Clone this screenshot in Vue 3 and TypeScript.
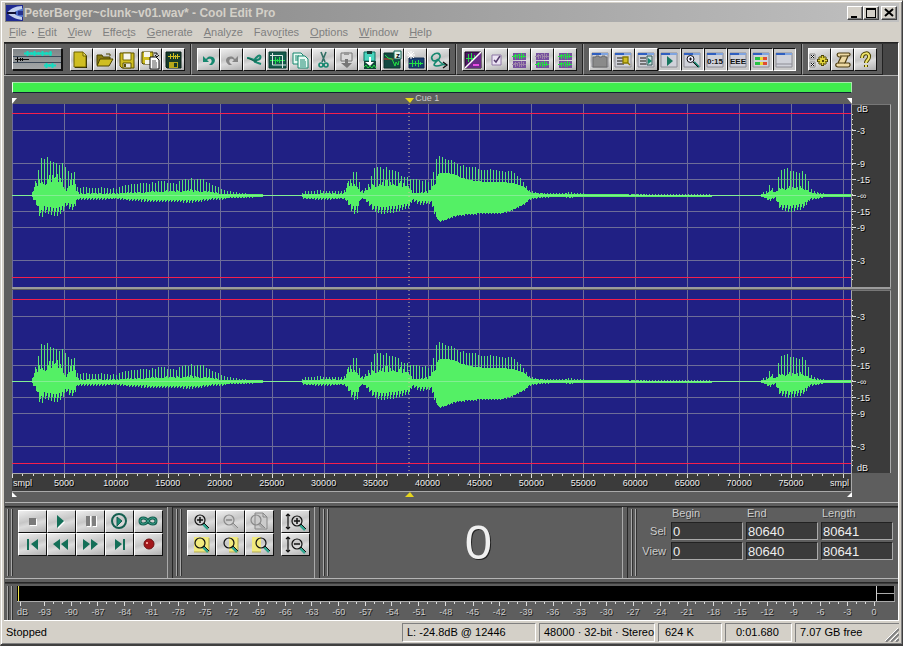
<script setup lang="ts">
import { h } from 'vue'

type Shape = [d: string, fill: string, stroke?: string, width?: number]
interface Tool { label: string; icon: string; down?: boolean }

const T = '#16876f'
const K = '#111'
const G = '#858585'
const Y = '#cfbe22'
const Q = '#2f5fc0'
const panel = (body: Shape[]): Shape[] => [
  ['M2 3h16v14H2z', '#d0d2da', '#8c8c94', 1], ['M2 3h16v2H2z', Q], ['M11 3h7v2h-7z', '#7fa4e0'], ...body,
]
const greenWave = (y: number): Shape => [`M3 ${y}.5h3M5 ${y - 1}.5h4M9 ${y - 2}.5h1M6.5 ${y - 2}v5M8.5 ${y - 1}v3M10.5 ${y - 2}v5M12.5 ${y - 3}v6M14.5 ${y - 2}v4M10 ${y}.5h7`, 'none', '#22e043', 1]
const greyWave = (y: number): Shape => [greenWave(y)[0], 'none', '#9d86a8', 1]
const lens = (x: number, y: number, c: string, handle: string): Shape[] => [
  [`M${x + 3} ${y + 4}l5 5`, 'none', handle, 2.5], [`M${x + 4} ${y + 3}l5 5`, 'none', c, 1],
  [`M${x - 5} ${y}a5 5 0 1 0 10 0a5 5 0 1 0 -10 0`, 'none', c, 1.2],
]

const icons: Record<string, Shape[]> = {
  new: [['M4 3h9l3 3v12H4z', '#17170c'], ['M3 2h9l3 3v12H3z', Y, '#6d6200', 1], ['M12 2v4h3', '#eee37a', '#6d6200', 1]],
  open: [['M3 15V5h5l1 2h7v3', '#8a7c10', '#4c4400', 1], ['M3 16l3-7h13l-4 7z', Y, '#4c4400', 1], ['M12 4h4v2', 'none', '#4c4400', 1]],
  save: [['M3 3h14v15H5l-2-2z', Y, '#5c5200', 1], ['M6 3h8v7H6z', '#f5f5ed', '#7a6d00', 1], ['M6 13h8v5H6z', '#e8e8e0', '#5c5200', 1], ['M7 14h2v3H7z', '#5c5200']],
  saveas: [['M2 2h11v12H3l-1-1z', Y, '#4c4400', 1], ['M4 2h6v5H4z', '#f5f5ed'], ['M5 10h5v4H5z', '#f5f5ed'], ['M10 7h6l3 3v9h-9z', '#fff', K, 1], ['M12 11h4M12 13h5M12 15h5M12 17h5', 'none', '#555', 1], ['M14 3h3v2M15 5l2 2 2-2', 'none', K, 1]],
  batch: [['M3 2h15v16H4l-1-1z', '#153b29', '#0b2018', 1], ['M5 6.5h12M7.5 4v5M10.5 3v6M12.5 5v4M14.5 4v5', 'none', Y, 1], ['M6 12h9v6H6z', '#b5a81a'], ['M11 13h3v4h-3z', '#153b29']],
  undo: [['M5 6v6h6L9 10c3-3 6 0 4 3l-2 2h3c6-4 2-10-4-8L8 9z', T]],
  redo: [['M17 6v6h-6l2-2c-3-3-6 0-4 3l2 2H8C2 11 6 5 12 7l2 2z', G]],
  brush: [['M3 8c4 0 7 3 10 2 5-1 4-6 1-4-2 2-5 4-3 6l6 2', 'none', T, 2], ['M4 8l6 3h3', 'none', '#0f5c4c', 1]],
  trim: [['M2 2h17v16H2z', '#155a4c', '#0d4035', 1], ['M3 10.5h15M5.5 8v5M8.5 7v7M10.5 9v3M12.5 7v6M15.5 8v5', 'none', '#24e34f', 1], ['M5.5 3v12H19M3 5.5h12.5V18', 'none', '#dce9e4', 1]],
  copy: [['M3 3h8l2 2v9H3z', '#e9fbf4', T, 1], ['M5 6h4M5 8h6M5 10h6', 'none', T, 1], ['M8 6h7l3 3v9H8z', '#e9fbf4', T, 1], ['M10 10h5M10 12h6M10 14h6M10 16h6', 'none', T, 1]],
  cut: [['M8 2l4 10M13 2L9 12', 'none', '#347066', 1.6], ['M6 15a2 2 0 1 0 4 0a2 2 0 1 0 -4 0M11 15a2 2 0 1 0 4 0a2 2 0 1 0 -4 0', 'none', T, 1.6]],
  paste: [['M5 3h11v8H5z', '#d9d9d9', '#777', 1], ['M8 2h5v3H8z', '#999'], ['M9 9h3v4h4l-5 5-6-5h4z', '#777']],
  pastenew: [['M5 2h11v9H5z', '#49d5be', '#0d6f60', 1], ['M8 1h5v3H8z', '#163c35'], ['M5 11h12v8H5z', '#104638'], ['M10 7h2v5h3l-4 4-5-4h4z', '#fff'], ['M5 17l2-2 2 3 2-2 2 2 2-3 2 3', 'none', '#22e043', 1]],
  zero: [['M2 3h16v15H2z', '#124a42', '#0a332d', 1], ['M2 9h10', 'none', '#d43c2a', 1], ['M3 5l3 3 4 1 3 7 1-4 2 3 1-4', 'none', '#22e043', 1], ['M12 1h7v8h-7z', '#e7f5f1', '#165', 1]],
  convert: [['M4 8h15v10H4z', '#173c6e', '#102a50', 1], ['M4 13.5h14M7.5 10v7M10.5 11v5M13.5 10v7M15.5 12v3', 'none', '#22e043', 1], ['M6 1v8M2 5h8M3 2l6 6M9 2L3 8', 'none', '#fff', 1]],
  script: [['M10 9c-5 5-8-1-5-4s8-2 7 2-6 5-6 8c3 3 8-1 12-1M10 9c2 4 4 5 7 6', 'none', T, 1.6], ['M15 12l4 3-4 3', 'none', K, 1.3]],
  fx: [['M2 2h16v16H2z', '#4d1766', '#16091b', 1], ['M3 8.5h12M5.5 4v8M8.5 3v8M11.5 5v6', 'none', '#22e043', 1], ['M2 18L18 2v16z', '#6a2a86'], ['M2 18L18 2', 'none', '#fff', 1.5], ['M10 15h6', 'none', '#e94de4', 2]],
  check: [['M6 5h9v10H6z', '#ebe3f3', '#8e78a6', 1], ['M8 10l2 2 4-6', 'none', '#533b6b', 1.5]],
  both: [['M4 3h13v7H4zM4 11h13v7H4z', '#76509f'], greenWave(6), greyWave(14)],
  right: [['M4 3h13v7H4zM4 11h13v7H4z', '#76509f'], greyWave(6), greenWave(14)],
  left: [['M4 3h13v7H4zM4 11h13v7H4z', '#76509f'], greenWave(6), greenWave(14)],
  organizer: panel([['M3 7h3V6h3v1h3V6h3v1h2v10H3z', '#8a8a8a', '#6a6a6a', 1]]),
  cues: panel([['M4 8h6M4 11h6M4 14h7', 'none', '#555', 1.5], ['M10 7h5v6h-5zM14 12l3 3', Y, '#887b00', 1.3]]),
  playlist: panel([['M4 8h6M4 11h6M4 14h6', 'none', '#555', 1.5], ['M11 6h5v9h-5z', '#c9e2dd', '#355', 1], ['M12 8l4 3-4 3z', T]]),
  transport: panel([['M8 6l6 5-6 5z', '#18765f']]),
  zoomwin: panel([['M12 12l5 5', 'none', T, 2], ['M5 9a3.5 3.5 0 1 0 7 0a3.5 3.5 0 1 0 -7 0M11 12l5 5M7 9h3M8.5 7.5v3', '#eef', K, 1]]),
  timewin: panel([]),
  selwin: panel([]),
  levels: panel([['M4 7h6v3H4zM4 12h6v3H4z', '#25c244'], ['M9 7h3v3H9zM9 12h3v3H9z', '#e7d938'], ['M12 7h4v3h-4zM12 12h4v3h-4z', '#e04b31']]),
  status: panel([['M2 14h16', 'none', '#8c8c94', 1]]),
  settings: [['M1 4h5v5H1zM1 12h5v5H1z', '#eee', '#888', 1], ['M2 5l3 3M5 5L2 8M2 13l3 3M5 13l-3 3', 'none', K, 1], ['M13.5 5v11M8 10.5h11M10 7l7 7M17 7l-7 7', 'none', '#4c4400', 3], ['M13.5 6v9M9 10.5h9M10.5 7.5l6 6M16.5 7.5l-6 6', 'none', '#e2d43b', 1.5], ['M11 10.5a2.5 2.5 0 1 0 5 0a2.5 2.5 0 1 0 -5 0', '#e2d43b'], ['M13 10h2v2h-2z', '#4c4400']],
  scripts: [['M7 3h10c2 1 1 3-1 3l-3 7h4c2 1 1 4-1 4H6c-3 0-3-4 0-4l3-6H7c-3-1-2-4 0-4z', '#edd9a3', '#4d3c10', 1.2], ['M8 6h8M6 13h7', 'none', '#4d3c10', 1]],
  help: [['M7 8c0-6 8-6 7-1 0 3-3 3-3 6M11 15v2', 'none', '#4d4500', 4], ['M7 8c0-6 8-6 7-1 0 3-3 3-3 6M11 15v2', 'none', '#efe36b', 2]],
  stop: [['M11 8h7v7h-7z', '#fff'], ['M10 7h7v7h-7z', '#7a7a7a']],
  play: [['M10 5l7 6-7 7z', '#fff'], ['M9 4l7 6-7 7z', '#146f58']],
  pause: [['M10 5h4v11h-4zM16 5h4v11h-4z', '#fff'], ['M9 5h4v10H9zM15 5h4v10h-4z', '#7e7e7e']],
  playend: [['M6 10a7 7 0 1 0 14 0a7 7 0 1 0 -14 0', 'none', '#155f50', 2], ['M11 6l5 4-5 5z', T, '#155f50', 1]],
  loop: [['M13 10c-2-4-8-4-8 0s6 4 8 0 8-4 8 0-6 4-8 0z', 'none', '#155f50', 3], ['M13 10c-2-4-8-4-8 0s6 4 8 0 8-4 8 0-6 4-8 0z', 'none', '#3aa38c', 1]],
  begin: [['M8 5h2v11H8zM19 5v11l-7-6z', '#146f58']],
  rewind: [['M12 5v11l-7-6zM20 5v11l-7-6z', '#146f58']],
  forward: [['M6 5v11l7-6zM14 5v11l7-6z', '#146f58']],
  end: [['M9 5v11l7-6zM17 5h2v11h-2z', '#146f58']],
  record: [['M9 10a5 5 0 1 0 10 0a5 5 0 1 0 -10 0', '#a3171b', '#6c1113', 1], ['M11 8h2v2h-2z', '#ef9a94']],
  zin: [...lens(12, 9, K, '#32a58e'), ['M9 9h6M12 6v6', 'none', K, 1.5]],
  zout: [...lens(12, 9, '#888', '#bbb'), ['M9 9h6', 'none', '#888', 1.5]],
  zfull: [['M9 2h8l4 4v12H9z', '#ccc', '#888', 1], ['M17 2v4h4', 'none', '#888', 1], ...lens(10, 9, '#888', '#aaa')],
  zsel: [['M6 3h15v15H6z', '#f1ea7d'], ['M21 4v14H6', 'none', '#b1a955', 1], ...lens(12, 9, K, '#32a58e')],
  zleft: [['M12 3h9v15h-9z', '#f1ea7d'], ['M21 4v14h-9', 'none', '#b1a955', 1], ...lens(12, 9, K, '#32a58e')],
  zright: [['M6 3h9v15H6z', '#f1ea7d'], ['M15 18H6', 'none', '#b1a955', 1], ...lens(15, 9, K, '#32a58e')],
  vin: [['M6 3v15M4 5l2-2 2 2M4 16l2 2 2-2', 'none', K, 1.2], ...lens(15, 10, K, '#32a58e'), ['M12 10h6M15 7v6', 'none', K, 1.5]],
  vout: [['M6 3v15M4 5l2-2 2 2M4 16l2 2 2-2', 'none', K, 1.2], ...lens(15, 10, K, '#32a58e'), ['M12 10h6', 'none', K, 1.5]],
}
const iconText: Record<string, { x: number; y: number; s: string }> = {
  timewin: { x: 10, y: 14, s: '0:15' },
  selwin: { x: 10, y: 14, s: 'EEE' },
  zero: { x: 16, y: 8, s: 'z' },
}

const Icon = (p: { name: string; w: number; ht: number }) => {
  const label = iconText[p.name]
  return h('svg', { width: p.w, height: p.ht, viewBox: `0 0 ${p.w} ${p.ht}`, 'aria-hidden': 'true', style: { display: 'block' } }, [
    ...icons[p.name].map(([d, fill, stroke, width]) => h('path', { d, fill, stroke: stroke ?? 'none', 'stroke-width': width ?? 0 })),
    ...(label ? [h('text', { x: label.x, y: label.y, 'text-anchor': 'middle', 'font-size': 8, 'font-weight': 'bold', fill: K }, label.s)] : []),
  ])
}
Icon.props = ['name', 'w', 'ht']

const menus = [['', 'F', 'ile'], ['', 'E', 'dit'], ['', 'V', 'iew'], ['Effec', 't', 's'], ['', 'G', 'enerate'], ['', 'A', 'nalyze'], ['Favo', 'r', 'ites'], ['', 'O', 'ptions'], ['', 'W', 'indow'], ['', 'H', 'elp']]

const t = (icon: string, label: string, down = false): Tool => ({ icon, label, down })
const toolGroups: Tool[][] = [
  [t('new', 'New'), t('open', 'Open'), t('save', 'Save'), t('saveas', 'Save As'), t('batch', 'Save All')],
  [t('undo', 'Undo'), t('redo', 'Redo'), t('brush', 'Repeat'), t('trim', 'Trim'), t('copy', 'Copy'), t('cut', 'Cut'), t('paste', 'Paste'), t('pastenew', 'Mix Paste'), t('zero', 'Zero Crossing'), t('convert', 'Convert Sample Type'), t('script', 'Send to Track')],
  [t('fx', 'Effects'), t('check', 'Toggle'), t('both', 'Edit Left'), t('right', 'Edit Right'), t('left', 'Edit Both')],
  [t('organizer', 'Organizer'), t('cues', 'Cue List'), t('playlist', 'Play List'), t('transport', 'Transport', true), t('zoomwin', 'Zoom Controls', true), t('timewin', 'Time Window', true), t('selwin', 'Selection Controls', true), t('levels', 'Level Meters', true), t('status', 'Status Bar', true)],
  [t('settings', 'Settings'), t('scripts', 'Scripts'), t('help', 'Help')],
]
const transport = [t('stop', 'Stop'), t('play', 'Play'), t('pause', 'Pause'), t('playend', 'Play to End'), t('loop', 'Loop'), t('begin', 'Go to Beginning'), t('rewind', 'Rewind'), t('forward', 'Fast Forward'), t('end', 'Go to End'), t('record', 'Record')]
const zooms = [t('zin', 'Zoom In'), t('zout', 'Zoom Out'), t('zfull', 'Zoom Full'), t('zsel', 'Zoom to Selection'), t('zleft', 'Zoom to Left'), t('zright', 'Zoom to Right')]
const vzooms = [t('vin', 'Zoom In Vertically'), t('vout', 'Zoom Out Vertically')]

// Envelope keyframes: x, peak height, solid height, depth below the centre line
const envelope: number[][] = [
  [0, 0, 0, 0], [19, 0, 0, 0], [20, 4, 4, 2], [24, 18, 12, 9], [27, 34, 18, 20], [29, 41, 18, 23], [32, 38, 16, 17], [38, 39, 22, 19], [45, 36, 24, 20], [50, 32, 14, 17], [54, 28, 6, 10], [58, 25, 17, 14], [62, 25, 16, 14], [64, 10, 7, 5],
  [67, 8, 2, 4], [83, 8, 2, 4], [103, 7, 2, 3], [118, 12, 3, 5], [138, 13, 4, 6], [146, 15, 4, 6], [152, 14, 5, 6], [165, 13, 5, 6], [175, 18, 6, 7], [188, 17, 5, 6], [198, 13, 4, 4], [208, 7, 2, 4], [218, 4, 1, 2], [230, 2, 1, 2], [250, 1, 1, 1], [254, 0, 0, 0],
  [289, 0, 0, 0], [291, 4, 1, 3], [310, 5, 2, 4], [330, 4, 2, 3], [333, 6, 4, 4], [336, 17, 14, 9], [339, 20, 14, 15], [342, 28, 14, 18], [345, 22, 13, 17], [348, 8, 4, 4], [351, 5, 3, 3], [356, 13, 8, 8], [361, 27, 12, 16], [370, 31, 15, 18], [378, 29, 15, 17], [384, 24, 15, 16], [390, 21, 14, 14], [397, 20, 10, 12], [400, 16, 3, 5], [408, 17, 3, 9], [416, 15, 4, 8], [419, 18, 9, 8], [422, 24, 15, 16],
  [425, 36, 18, 22], [428, 41, 22, 26], [433, 38, 22, 25], [443, 34, 21, 21], [448, 31, 18, 20], [458, 29, 15, 19], [473, 26, 13, 18], [490, 25, 13, 18], [501, 24, 12, 15], [508, 19, 10, 11], [514, 11, 7, 8], [518, 5, 3, 4], [528, 2, 2, 2], [548, 2, 1, 1], [558, 3, 2, 2], [566, 2, 1, 1], [590, 1, 1, 1], [700, 1, 0, 1], [701, 0, 0, 0],
  [748, 0, 0, 0], [751, 2, 1, 1], [756, 5, 3, 4], [758, 11, 5, 5], [761, 8, 6, 4], [764, 3, 2, 2], [766, 18, 6, 8], [769, 27, 9, 14], [779, 28, 9, 16], [788, 25, 9, 14], [793, 23, 9, 12], [796, 19, 6, 7], [799, 7, 3, 4], [806, 3, 2, 3], [815, 1, 1, 1], [839, 1, 1, 1],
]
function sample(x: number): number[] {
  const i = Math.max(1, envelope.findIndex(e => e[0] >= x))
  const a = envelope[i - 1], b = envelope[i]
  const k = (x - a[0]) / (b[0] - a[0])
  return [1, 2, 3].map(n => a[n] + (b[n] - a[n]) * k)
}
const MID = 91
let bodyPath = ''
let peakPath = ''
for (let x = 0; x < 840; x++) {
  const [p, b, d] = sample(x)
  if (p < 1) continue
  const dense = x > 424 && x < 520
  const beat = x % 3
  const wobble = ((x * x * 31 + x * 17) % 13) / 13
  const low = Math.round(dense ? d - (beat === 0 ? 0 : 1) : d * (beat === 0 ? 1 : beat === 1 ? 0.8 : 0.6))
  const top = Math.round(dense ? b : b * (0.6 + 0.4 * wobble))
  bodyPath += `M${x} ${MID - top}h1v${top + low + 1}h-1z`
  const peak = Math.round(p * (dense ? 0.95 + 0.05 * wobble : 0.86 + 0.14 * wobble))
  if (beat === 2) peakPath += `M${x} ${MID - peak}h1V${MID}h-1z`
}

const rows = [26, 59, 75, 91, 107, 123, 156]
const dbNames = ['-3', '-9', '-15', '-∞', '-15', '-9', '-3']
const ruler = ['smpl', ...Array.from({ length: 15 }, (_, i) => String((i + 1) * 5000)), 'smpl']
const meter = ['dB', ...Array.from({ length: 32 }, (_, i) => String(i * 3 - 93))]
const columns = ['Begin', 'End', 'Length']
const ranges = [{ name: 'Sel', values: ['0', '80640', '80641'] }, { name: 'View', values: ['0', '80640', '80641'] }]
</script>

<template>
  <main class="window">
    <header class="title">
      <svg class="logo" width="17" height="16" viewBox="0 0 17 16" aria-hidden="true"><path d="M0 0h17v16H0z" fill="#202b91" /><path d="M10 3h7v9h-7z" fill="#4a6cc8" /><path d="M16 1C9 1 4 4 1 8c3 3 8 6 15 7v-3c-4-1-7-2-8-4 1-2 4-3 8-4z" fill="#c3d0ee" /><path d="M1 7h9v2H1z" fill="#101034" /><path d="M12 6h5v4h-5z" fill="#26318f" /></svg>
      <h1>PeterBerger~clunk~v01.wav* - Cool Edit Pro</h1>
      <div class="caption">
        <button aria-label="Minimize"><svg width="14" height="12"><path d="M3 9h6v2H3z" /></svg></button>
        <button aria-label="Maximize"><svg width="14" height="12"><path d="M2 1h10v10H2zM3 3v7h8V3z" fill-rule="evenodd" /></svg></button>
        <button aria-label="Close"><svg width="14" height="12"><path d="M3 2l8 7M11 2L3 9" fill="none" stroke="#000" stroke-width="2" /></svg></button>
      </div>
    </header>
    <nav class="menu"><button v-for="m in menus" :key="m.join('')">{{ m[0] }}<u>{{ m[1] }}</u>{{ m[2] }}</button></nav>

    <div class="client">
      <div class="toolbar">
        <div v-for="(g, gi) in toolGroups" :key="gi" class="group">
          <button v-if="gi === 0" class="mode" aria-label="Switch to Multitrack View">
            <svg width="48" height="20" viewBox="0 0 48 20" aria-hidden="true"><path d="M0 7.5h48M0 13.5h48" stroke="#3c4958" /><path d="M11 4.5h28M14.5 2v5M18.5 3v3M21.5 2v5M25.5 3v3M29.5 2v5M33.5 3v3M37.5 2v5" fill="none" stroke="#14dcc0" stroke-width="2" /><path d="M2 10.5h14M4.5 8v5M7.5 9v3M9.5 9v3" fill="none" stroke="#0a0a0a" stroke-width="1" /><path d="M31 16.5h12M33.5 14v5M36.5 15v3M39.5 14v5" fill="none" stroke="#14dcc0" stroke-width="2" /></svg>
          </button>
          <button v-for="b in g" :key="b.icon" class="tool" :class="{ down: b.down }" :aria-label="b.label"><Icon :name="b.icon" :w="21" :ht="20" /></button>
        </div>
      </div>

      <section class="editor">
        <div class="overview"></div>
        <div class="cues">
          <svg width="5" height="6"><path d="M0 0h5L0 6z" fill="#fff" /></svg>
          <svg width="5" height="6"><path d="M0 0h5v6z" fill="#fff" /></svg>
          <span class="cue"><svg width="9" height="6"><path d="M0 0h9L5 5z" fill="#e6d51c" /></svg><span>Cue 1</span></span>
        </div>
        <div v-for="ch in 2" :key="ch" class="channel">
          <svg class="wave" viewBox="0 0 840 183" preserveAspectRatio="none" shape-rendering="crispEdges" role="img" :aria-label="ch === 1 ? 'Left channel' : 'Right channel'">
            <path v-for="n in 17" :key="n" :d="`M${(n - 1) * 52} 0h1v183h-1z`" fill="#6d6d98" />
            <path v-for="y in rows" :key="y" :d="`M0 ${y}h840v1H0z`" fill="#6d6d98" />
            <rect x="0" y="9" width="840" height="1" fill="#f4204c" />
            <rect x="0" y="173" width="840" height="1" fill="#f4204c" />
            <path :d="peakPath" fill="#58e474" />
            <path :d="bodyPath" fill="#54f065" />
            <path d="M0 91h840v1H0z" fill="#83ee93" />
            <path d="M397.5 0v183" stroke="#d8c89c" stroke-dasharray="1 3" />
          </svg>
          <svg class="scale" width="40" height="183" viewBox="0 0 38 182">
            <path v-for="n in 34" :key="'m' + n" :d="`M0 ${n * 5 + 4}h1v1H0z`" fill="#ddd" />
            <template v-for="(y, i) in rows" :key="y">
              <path :d="`M0 ${y - 1}h4v1H0z`" fill="#ddd" />
              <text x="5" :y="y + 3" class="shade">{{ dbNames[i] }}</text>
            </template>
            <text x="5" :y="ch === 1 ? 7 : 180" class="shade">dB</text>
          </svg>
        </div>
        <div class="ruler">
          <svg class="ticks" viewBox="0 0 840 5" preserveAspectRatio="none" shape-rendering="crispEdges" aria-hidden="true">
            <path v-for="n in 81" :key="n" :d="`M${Math.round((n - 1) * 10.4)} 0h1v${(n - 1) % 5 ? 2 : 4}h-1z`" fill="#ddd" />
          </svg>
          <span v-for="(r, i) in ruler" :key="i">{{ r }}</span>
        </div>
        <div class="cues bottom">
          <svg width="5" height="6"><path d="M0 0v5h5z" fill="#fff" /></svg>
          <svg width="5" height="6"><path d="M5 0v5H0z" fill="#fff" /></svg>
          <span class="cue"><svg width="9" height="6"><path d="M0 5h9L5 0z" fill="#e6d51c" /></svg></span>
        </div>
      </section>

      <div class="rail"></div>
      <div class="docks">
        <section class="dock">
          <i class="grip"></i>
          <div class="pad five"><button v-for="b in transport" :key="b.icon" :aria-label="b.label"><Icon :name="b.icon" :w="27" :ht="21" /></button></div>
        </section>
        <section class="dock">
          <i class="grip"></i>
          <div class="pad three"><button v-for="b in zooms" :key="b.icon" :aria-label="b.label"><Icon :name="b.icon" :w="27" :ht="21" /></button></div>
          <div class="pad one"><button v-for="b in vzooms" :key="b.icon" :aria-label="b.label"><Icon :name="b.icon" :w="27" :ht="21" /></button></div>
        </section>
        <section class="dock clock"><i class="grip"></i><output>0</output></section>
        <section class="dock last">
          <i class="grip"></i>
          <div class="fields">
            <span></span>
            <span v-for="c in columns" :id="'col-' + c" :key="c" class="head">{{ c }}</span>
            <template v-for="r in ranges" :key="r.name">
              <label :id="'row-' + r.name" class="side" :for="r.name + '-0'">{{ r.name }}</label>
              <input v-for="(v, i) in r.values" :id="r.name + '-' + i" :key="i" type="text" :value="v" :aria-labelledby="`row-${r.name} col-${columns[i]}`">
            </template>
          </div>
        </section>
      </div>

      <div class="rail"></div>
      <section class="levels">
        <i class="grip"></i>
        <div class="meter">
          <div class="bar"><b class="floor"></b><span class="clip"><i></i><i></i></span></div>
          <div class="marks">
            <svg class="ticks" viewBox="0 0 877 5" preserveAspectRatio="none" shape-rendering="crispEdges" aria-hidden="true">
              <path d="M3 0h1v4H3z" fill="#ddd" />
              <path v-for="n in 94" :key="n" :d="`M${Math.round((n - 1) * 8.91 + 27)} 0h1v${(n - 1) % 3 ? 2 : 4}h-1z`" fill="#ddd" />
            </svg>
            <span v-for="m in meter" :key="m">{{ m }}</span>
          </div>
        </div>
      </section>
    </div>

    <footer class="status">
      <span class="state">Stopped</span>
      <span class="cell level">L: -24.8dB @ 12446</span>
      <span class="cell format">48000 · 32-bit · Stereo</span>
      <span class="cell size">624 K</span>
      <span class="cell time">0:01.680</span>
      <span class="cell free">7.07 GB free<svg width="14" height="14" aria-hidden="true"><path d="M1 14L14 1M6 14l8-8M11 14l3-3" stroke="#808080" stroke-width="2" /><path d="M0 13L13 0M5 13l8-8M10 13l3-3" stroke="#fff" /></svg></span>
    </footer>
  </main>
</template>

<style>
body { margin: 0; background: #d4d0c8; }
</style>

<style scoped>
* { box-sizing: border-box; }
.window { min-height: 100vh; display: flex; flex-direction: column; padding: 2px 3px 1px 2px; border: 1px solid #404040; border-top-color: #d4d0c8; border-left-color: #d4d0c8; border-bottom-width: 2px; background: #d4d0c8; box-shadow: inset 1px 1px #fff, inset -1px -1px #808080; font: 11px/14px "Liberation Sans", Arial, sans-serif; color: #000; }
button { font: inherit; padding: 0; margin: 0; border-radius: 0; }
.title { display: flex; align-items: center; height: 19px; margin-left: 2px; padding: 0 2px 0 1px; background: linear-gradient(90deg, #808080, #c0c0c0); }
.logo { flex: none; }
h1 { flex: 1; margin: 0 0 0 1px; font: bold 12px/18px "Liberation Sans", Arial, sans-serif; color: #d4d0c8; white-space: nowrap; }
.caption { display: flex; }
.caption button { width: 16px; height: 14px; background: #d4d0c8; border: 1px solid #fff; border-right-color: #404040; border-bottom-color: #404040; box-shadow: inset -1px -1px #808080; }
.caption button:last-child { margin-left: 2px; }
.caption svg { display: block; }
.menu { display: flex; gap: 11px; height: 20px; padding-left: 6px; align-items: center; }
.menu button { position: relative; border: 0; background: none; color: #808080; line-height: 16px; }
.menu button:first-child::after { content: "·"; position: absolute; right: -8px; color: #222; }
.client { flex: 1; display: flex; flex-direction: column; margin-left: 1px; background: #5e5e5e; border-top: 1px solid #222; border-right: 1px solid #fff; border-bottom: 1px solid #fff; }
.toolbar { display: flex; height: 33px; padding-left: 1px; background: #464646; border-top: 1px solid #333; border-bottom: 1px solid #b0b0b0; }
.group { display: flex; align-items: flex-start; padding: 4px 5px 0; background: #5e5e5e; border-left: 1px solid #9a9a9a; border-right: 1px solid #222; border-bottom: 1px solid #222; }
.group:first-child { padding-left: 6px; }
.tool, .mode, .pad button { background: linear-gradient(165deg, #eee, #c6c6c6 45%, #dcdcdc 60%, #b0b0b0); border: 1px solid #fff; border-right-color: #111; border-bottom-color: #111; }
.tool { width: 23px; height: 23px; }
.mode { width: 50px; height: 22px; margin-right: 8px; background: linear-gradient(#7f8588, #a4a7a8); box-shadow: 1px 1px #111; }
.mode svg { display: block; }
.tool.down { border-color: #111 #fff #fff #111; background: #c9c9c9; }
.editor { display: flex; flex-direction: column; padding: 6px 7px 3px 8px; }
.overview { height: 11px; margin-right: 39px; background: #3fec4d; border: 1px solid #a9e8ac; border-bottom-color: #123; border-left-color: #e4ffe4; }
.cues { position: relative; display: flex; justify-content: space-between; align-items: flex-end; height: 11px; margin-right: 39px; }
.cues svg { display: block; }
.cues.bottom { height: 7px; align-items: flex-start; }
.cue { position: absolute; left: calc(47.3% - 4px); bottom: 0; display: flex; align-items: flex-end; gap: 1px; font-size: 9px; line-height: 11px; color: #ccc; }
.bottom .cue { bottom: auto; top: 0; }
.channel { display: flex; height: 185px; margin-bottom: 1px; border-bottom: 2px solid #9b9b9b; }
.channel + .channel { height: 183px; margin-bottom: 0; border-bottom: 0; }
.wave { flex: 1; min-width: 0; height: 183px; background: #202084; }
.scale { flex: none; background: #3b3b3b; border-left: 1px solid #aaa; border-right: 1px solid #aaa; border-top: 1px solid #777; }
.shade { font-size: 9px; fill: #eee; text-shadow: 1px 1px #000; }
.ruler { position: relative; display: grid; grid-template-columns: 26fr repeat(15, 52fr) 34fr; height: 19px; margin-right: 39px; padding-top: 4px; background: #3b3b3b; border-top: 1px solid #aaa; border-bottom: 1px solid #aaa; border-right: 1px solid #aaa; color: #eee; text-shadow: 1px 1px #000; font-size: 9px; line-height: 10px; text-align: center; }
.ruler span { min-width: 0; white-space: nowrap; }
.ruler span:first-of-type { text-align: left; padding-left: 1px; }
.ruler span:last-child { text-align: right; padding-right: 2px; }
.ticks { position: absolute; inset: 0 0 auto; width: 100%; height: 5px; }
.rail { height: 5px; margin-left: 1px; border-top: 1px solid #b4b4b4; border-bottom: 1px solid #262626; box-shadow: 0 1px #3d3d3d; }
.docks { display: flex; height: 71px; }
.dock { display: flex; align-items: flex-start; padding: 3px 4px 0 3px; border-right: 1px solid #262626; box-shadow: inset -4px 0 #5e5e5e, inset -5px 0 #aaa; }
.dock:nth-child(2) { padding-right: 9px; }
.dock:first-child { padding-right: 9px; }
.grip { flex: none; width: 5px; height: 67px; margin: -1px 6px 0 0; border: solid #aaa; border-width: 0 1px; box-shadow: 1px 0 #333, inset 1px 0 #333; }
.pad { display: grid; }
.five { grid-template-columns: repeat(5, 29px); }
.three { grid-template-columns: repeat(3, 29px); margin-right: 7px; }
.one { grid-template-columns: 29px; }
.pad button { height: 23px; }
.clock { flex: 1; }
.clock output { flex: 1; text-align: center; font-size: 49px; line-height: 64px; color: #f0f0f0; text-shadow: 1px 1px #222; }
.last { border: 0; box-shadow: none; padding: 3px 5px 0 3px; }
.fields { display: grid; grid-template-columns: 26px repeat(3, 72px); column-gap: 3px; row-gap: 2px; align-items: center; color: #ccc; text-shadow: 1px 1px #333; margin-top: -4px; }
.head { padding-left: 1px; line-height: 14px; }
.side { text-align: right; padding-right: 2px; }
.fields input { width: 100%; height: 18px; padding: 0 1px; border: 1px solid #222; border-right-color: #aaa; border-bottom-color: #aaa; border-radius: 0; background: #3b3b3b; color: #eee; font: 13px/16px "Liberation Sans", Arial, sans-serif; }
.levels { display: flex; flex: 1; padding: 3px 3px 0; }
.levels .grip { height: 34px; margin: 0 5px 0 0; }
.meter { flex: 1; min-width: 0; }
.bar { display: flex; justify-content: space-between; height: 16px; background: #000; border-bottom: 1px solid #aaa; }
.floor { width: 1px; margin-left: 1px; background: #eee34a; }
.clip { display: flex; flex-direction: column; width: 19px; border-left: 1px solid #ccc; border-right: 1px solid #888; }
.clip i { flex: 1; border-top: 1px solid #aaa; }
.clip i:first-child { border-top: 0; }
.marks { position: relative; display: grid; grid-template-columns: 11fr repeat(32, 21fr) 6fr; padding-top: 4px; font-size: 9px; line-height: 12px; text-align: center; color: #ccc; text-shadow: 1px 1px #222; }
.marks span { min-width: 0; white-space: nowrap; }
.marks span:first-of-type { text-align: left; }
.status { display: flex; gap: 3px; height: 22px; padding: 2px 0 1px 3px; }
.status span { line-height: 18px; white-space: nowrap; }
.state { flex: 1; }
.cell { display: flex; justify-content: space-between; border: 1px solid #808080; border-right-color: #fff; border-bottom-color: #fff; padding-left: 4px; }
.cell.level, .cell.format, .cell.size, .cell.time, .cell.free { line-height: 17px; }
.level { width: 134px; }
.format { width: 116px; }
.size { width: 64px; }
.time { width: 67px; }
.cell.size { padding-left: 6px; }
.cell.time { padding-left: 10px; }
.free { width: 104px; border-right: 0; border-bottom: 0; }
.free svg { align-self: flex-end; }
</style>
